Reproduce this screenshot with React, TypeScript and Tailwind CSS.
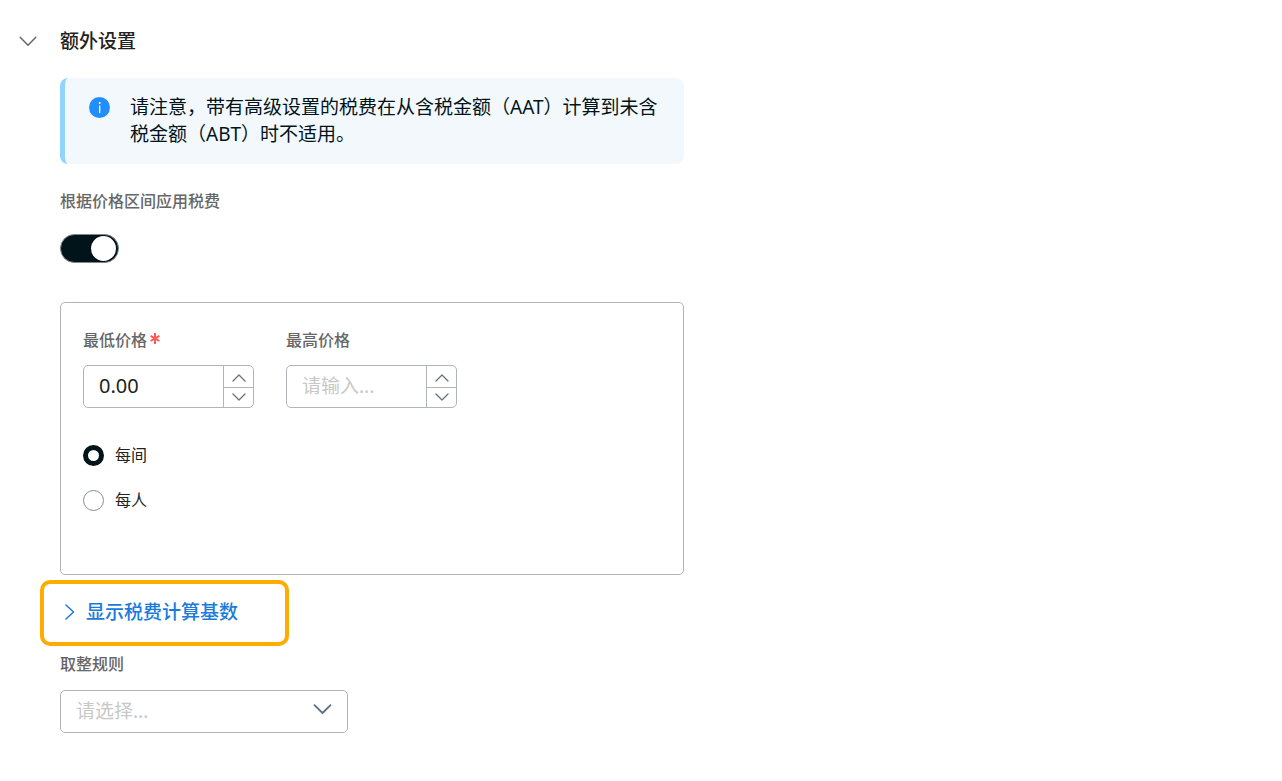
import { useId, useState } from "react";

type ChevronProps = { d: string; width: number; height: number; stroke?: number; className?: string };

function Chevron({ d, width, height, stroke = 1.5, className }: ChevronProps) {
  return (
    <svg
      aria-hidden
      width={width}
      height={height}
      viewBox={`0 0 ${width} ${height}`}
      fill="none"
      stroke="currentColor"
      strokeWidth={stroke}
      strokeLinecap="round"
      strokeLinejoin="round"
      className={className}
    >
      <path d={d} />
    </svg>
  );
}

const labelClass = "text-base leading-6 font-medium text-[#666]";

function Asterisk() {
  return (
    <svg
      aria-hidden
      width="10"
      height="24"
      viewBox="0 0 10 24"
      stroke="currentColor"
      strokeWidth="2"
      className="ml-[3px] inline-block align-top text-[#ff5a52]"
    >
      <path d="M5 5v11M.6 7.800l8.800 5.200M9.400 7.800L.6 13" />
    </svg>
  );
}

type NumberFieldProps = { label: string; required?: boolean; initial?: string };

function NumberField({ label, required = false, initial = "" }: NumberFieldProps) {
  const id = useId();
  const [value, setValue] = useState(initial);

  const step = (delta: number) => {
    const next = Math.max(0, (parseFloat(value) || 0) + delta);
    setValue(next.toFixed(2));
  };

  return (
    <div className="flex w-[171px] flex-col gap-[13px]">
      <label htmlFor={id} className={labelClass}>
        {label}
        {required && <Asterisk />}
      </label>
      <div className="flex h-[43px] overflow-hidden rounded-[5px] border border-[#b1b5b8]">
        <input
          id={id}
          type="text"
          inputMode="decimal"
          required={required}
          value={value}
          placeholder="请输入..."
          onChange={(e) => setValue(e.target.value)}
          className="min-w-0 flex-1 px-[15px] pb-[2px] text-xl text-[#222] outline-none placeholder:text-[19px] placeholder:text-[#c8c8c8]"
        />
        <div className="flex w-[30px] flex-col border-l border-[#b1b5b8] text-[#66737c]">
          <button
            type="button"
            aria-label={`${label} +1`}
            onClick={() => step(1)}
            className="flex flex-1 items-center justify-center pt-[3px]"
          >
            <Chevron d="M1 7l6-6 6 6" width={14} height={8} stroke={1.3} />
          </button>
          <button
            type="button"
            aria-label={`${label} -1`}
            onClick={() => step(-1)}
            className="flex h-5 items-center justify-center border-t border-[#b1b5b8] pb-px"
          >
            <Chevron d="M1 1l6 6 6-6" width={14} height={8} stroke={1.3} />
          </button>
        </div>
      </div>
    </div>
  );
}

function InfoNote() {
  return (
    <div className="flex gap-5 rounded-lg border-l-[5px] border-[#91d5ff] bg-[#f3f8fd] py-4 pr-5 pl-6">
      <svg aria-hidden width="21" height="21" viewBox="0 0 21 21" className="mt-[3px] shrink-0">
        <circle cx="10.500" cy="10.500" r="10.500" fill="#218efc" />
        <circle cx="10.700" cy="6" r="1" fill="#fff" />
        <path d="M10.700 8.500v7.500" stroke="#fff" strokeWidth="1.300" />
      </svg>
      <p className="text-[19px] leading-[27px] text-[#00141a]">
        请注意，带有高级设置的税费在从含税金额（AAT）计算到未含税金额（ABT）时不适用。
      </p>
    </div>
  );
}

const units = ["每间", "每人"];

export default function App() {
  const [open, setOpen] = useState(true);
  const [unit, setUnit] = useState(units[0]);

  return (
    <main className="bg-white px-[18px] pt-[27px] pb-12 font-['Noto_Sans','Noto_Sans_CJK_SC',sans-serif]">
      <h2 className="text-[19px] leading-7 font-medium text-[#222]">
        <button type="button" aria-expanded={open} onClick={() => setOpen(!open)} className="flex items-center gap-[22px]">
          <Chevron d="M2.200 1.200l7.800 8 7.800-8" width={20} height={11} className="text-[#666]" />
          额外设置
        </button>
      </h2>

      {open && (
        <div className="mt-[23px] ml-[42px] max-w-[624px]">
          <InfoNote />

          <label htmlFor="range" className={`mt-[25px] block ${labelClass}`}>
            根据价格区间应用税费
          </label>
          <input
            id="range"
            type="checkbox"
            role="switch"
            defaultChecked
            className="mt-[21px] block h-[29px] w-[59px] appearance-none rounded-full border border-[#7d898c] bg-[#bbb] p-px before:block before:size-[25px] before:rounded-full before:bg-white before:shadow-sm checked:bg-[#00141a] checked:before:ml-[29px]"
          />

          <section className="mt-[39px] rounded-[5px] border border-[#b1b5b8] px-[22px] pt-[25px] pb-[62px]">
            <div className="flex flex-wrap gap-8">
              <NumberField label="最低价格" required initial="0.00" />
              <NumberField label="最高价格" />
            </div>
            <div role="radiogroup" aria-label="计费单位" className="mt-[35px] flex flex-col items-start gap-[21px]">
              {units.map((name) => (
                <label key={name} className="flex items-center gap-[11px] text-base leading-6 text-[#222]">
                  <input
                    type="radio"
                    name="unit"
                    checked={unit === name}
                    onChange={() => setUnit(name)}
                    className="size-[21px] appearance-none rounded-full border border-[#858f92] bg-white checked:border-5 checked:border-[#00141a]"
                  />
                  {name}
                </label>
              ))}
            </div>
          </section>

          <button
            type="button"
            className="mt-[5px] -ml-5 flex h-[66px] w-[249px] items-center gap-[11px] rounded-[10px] border-4 border-[#ffab00] pb-[2px] pl-[21px] text-[19px] leading-7 font-medium text-[#1b7bdc]"
          >
            <Chevron d="M1 1l7.500 7L1 15" width={10} height={16} />
            显示税费计算基数
          </button>

          <label htmlFor="rounding" className={`mt-[6px] block ${labelClass}`}>
            取整规则
          </label>
          <div className="relative mt-[14px] w-[288px]">
            <select
              id="rounding"
              defaultValue=""
              className="block h-[43px] w-full appearance-none rounded-[5px] border border-[#b1b5b8] bg-white px-[15px] pb-[2px] text-[19px] leading-7 text-[#c8c8c8]"
            >
              <option value="">请选择...</option>
            </select>
            <Chevron
              d="M1.500 1.200l8 7.800 8-7.800"
              width={19}
              height={11}
              stroke={1.8}
              className="pointer-events-none absolute top-[14px] right-4 text-[#5e7183]"
            />
          </div>
        </div>
      )}
    </main>
  );
}
